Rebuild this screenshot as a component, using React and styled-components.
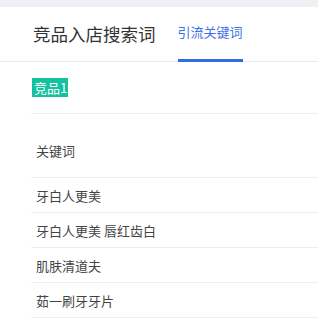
import React from 'react';
import styled, { createGlobalStyle } from 'styled-components';

const GlobalStyle = createGlobalStyle`
  html, body {
    margin: 0;
    padding: 0;
    background: #ffffff;
    font-family: "Noto Sans CJK SC", "Noto Sans", sans-serif;
    overflow: hidden;
  }
`;

const Page = styled.div`
  width: 318px;
  height: 320px;
  background: #ffffff;
  border-top: 7px solid #eef0f4;
  box-sizing: border-box;
`;

const TabBar = styled.div`
  display: flex;
  align-items: stretch;
  height: 55px;
  border-bottom: 1px solid #ebebeb;
  padding-left: 33px;
  box-sizing: border-box;
`;

const Title = styled.div`
  display: flex;
  align-items: center;
  font-size: 17.5px;
  color: #333333;
  margin-right: 22px;
  padding-bottom: 2px;
`;

const Tab = styled.div`
  display: flex;
  align-items: center;
  font-size: 13px;
  color: ${p => (p.active ? '#3d6fe8' : '#666666')};
  border-bottom: 3px solid ${p => (p.active ? '#2f6bea' : 'transparent')};
  margin-bottom: -1px;
  padding-bottom: 3px;
`;

const Body = styled.div`
  display: flex;
  flex-direction: column;
  align-items: flex-start;
  padding: 16px 0 0 31px;
`;

const Badge = styled.span`
  display: block;
  background: #13c2a0;
  color: #ffffff;
  font-size: 13px;
  line-height: 19px;
  height: 19px;
  padding: 0 1px 0 2px;
  margin-left: 1px;
`;

const Table = styled.div`
  align-self: stretch;
  margin-top: 16px;
  border-top: 1px solid #eeeeee;
`;

const Row = styled.div`
  display: flex;
  align-items: center;
  height: ${p => (p.head ? '64px' : '35px')};
  padding: ${p => (p.head ? '10px 5px 0' : '0 5px')};
  box-sizing: border-box;
  border-bottom: 1px solid #eeeeee;
  font-size: 13px;
  color: #444444;
`;

const keywords = ['牙白人更美', '牙白人更美 唇红齿白', '肌肤清道夫', '茹一刷牙牙片'];

export default function App() {
  return (
    <>
      <GlobalStyle />
      <Page>
        <TabBar>
          <Title>竞品入店搜索词</Title>
          <Tab active>引流关键词</Tab>
        </TabBar>
        <Body>
          <Badge>竞品1</Badge>
          <Table>
            <Row head>关键词</Row>
            {keywords.map(k => (
              <Row key={k}>{k}</Row>
            ))}
          </Table>
        </Body>
      </Page>
    </>
  );
}
